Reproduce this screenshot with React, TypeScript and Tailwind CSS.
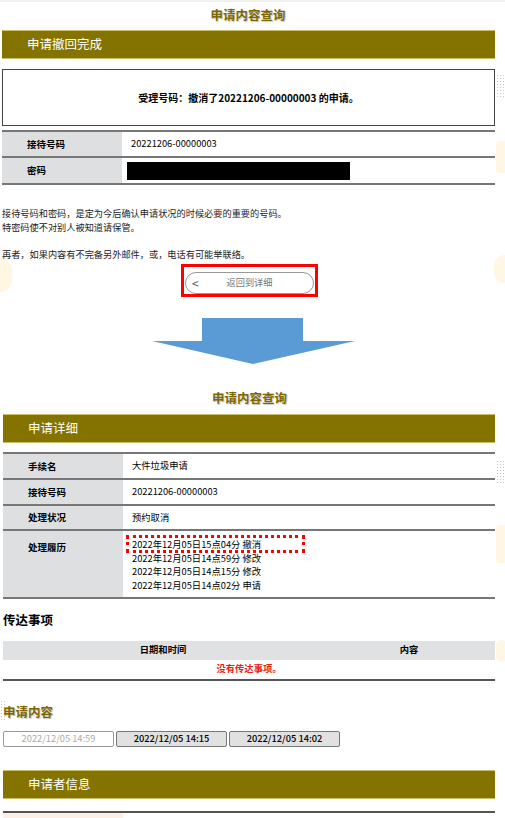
import React from "react";

const FONT = { fontFamily: '"Noto Sans CJK SC", "Noto Sans", sans-serif' };

function Bar({ title }: { title: string }) {
  return (
    <div className="h-[29px] bg-[#857300] border-t border-b border-[#c9bd6a] flex items-center pl-[25px]">
      <span className="text-white text-[12.5px] leading-none">{title}</span>
    </div>
  );
}

function Title({ text }: { text: string }) {
  return (
    <div className="text-center text-[12.5px] font-bold text-[#7d6800] [text-shadow:1px_1px_1px_#c8c8c8] leading-none">
      {text}
    </div>
  );
}

function Row({
  label,
  children,
  h,
  top = false,
}: {
  label: string;
  children: React.ReactNode;
  h: string;
  top?: boolean;
}) {
  return (
    <div className={`flex border-b-2 border-[#777] ${h}`}>
      <div
        className={`w-[120px] shrink-0 bg-[#dedfe0] pl-[25px] text-[9.5px] font-bold text-black flex ${
          top ? "items-start pt-[9px]" : "items-center"
        }`}
      >
        {label}
      </div>
      <div className={`flex-1 pl-[9px] text-[9.3px] text-black flex ${top ? "items-start" : "items-center"}`}>
        {children}
      </div>
    </div>
  );
}

export default function App() {
  return (
    <div className="relative w-[505px] h-[818px] overflow-hidden bg-white" style={FONT}>
      {/* faint side decorations */}
      <div className="absolute left-[496px] top-[74px] w-[9px] h-[24px] bg-[radial-gradient(#c9c4d8_1px,transparent_1px)] bg-[length:3px_3px]" />
      <div className="absolute left-[496px] top-[460px] w-[9px] h-[24px] bg-[radial-gradient(#c9c4d8_1px,transparent_1px)] bg-[length:3px_3px]" />
      <div className="absolute left-0 top-[700px] w-[5px] h-[22px] bg-[radial-gradient(#c9c4d8_1px,transparent_1px)] bg-[length:3px_3px]" />
      <div className="absolute left-[496px] top-[141px] w-[12px] h-[32px] rounded-[4px] bg-[#fff7e4]" />
      <div className="absolute left-[496px] top-[525px] w-[12px] h-[38px] rounded-[4px] bg-[#fff7e4]" />
      <div className="absolute left-[496px] top-[640px] w-[12px] h-[22px] rounded-[6px] bg-[#fff7e4]" />
      <div className="absolute left-[494px] top-[255px] w-[22px] h-[28px] rounded-full bg-[#fff7e4]" />
      <div className="absolute left-[-12px] top-[258px] w-[24px] h-[34px] rounded-full bg-[#fff7e4]" />

      <div className="relative">
        <div className="h-[2px] bg-[#f0f0f0]" />
        <div className="h-[28px] flex items-center justify-center pr-[9px] pb-[2px]">
          <Title text="申请内容查询" />
        </div>

        <div className="pl-[2px] pr-[10px]">
          <Bar title="申请撤回完成" />

          <div className="mt-[10px] h-[57px] border border-[#444] flex items-center justify-center">
            <span className="text-[10px] font-bold text-black">受理号码：撤消了20221206-00000003 的申请。</span>
          </div>

          <div className="mt-[4px] border-t-2 border-[#777]">
            <Row label="接待号码" h="h-[26px]">20221206-00000003</Row>
            <Row label="密码" h="h-[27px]">
              <div className="w-[223px] h-[18px] bg-black -ml-[4px]" />
            </Row>
          </div>

          <div className="mt-[22px] text-[9.2px] leading-[13.5px] text-[#222]">
            <p>接待号码和密码，是定为今后确认申请状况的时候必要的重要的号码。</p>
            <p>特密码使不对别人被知道请保管。</p>
            <p>&nbsp;</p>
            <p>再者，如果内容有不完备另外邮件，或，电话有可能举联络。</p>
          </div>

          <div className="flex justify-center mt-[3px] pl-[2px]">
            <div className="w-[137px] h-[33px] border-[3px] border-[#ff0000] flex items-center justify-center">
              <div className="w-[129px] h-[22px] mt-[4px] rounded-[11px] border border-[#999] bg-white flex items-center relative">
                <span className="absolute left-[6px] text-[12px] text-[#555] leading-none">&lt;</span>
                <span className="flex-1 text-center text-[9.2px] text-[#777]">返回到详细</span>
              </div>
            </div>
          </div>
        </div>

        {/* arrow */}
        <div className="flex justify-center mt-[21px] pl-[1px]">
          <svg width="203" height="46" viewBox="0 0 203 46">
            <polygon points="50,0 151,0 151,23 203,23 101,46 0,23 50,23" fill="#5b9bd5" />
          </svg>
        </div>

        <div className="mt-[27px] h-[14px] flex items-center justify-center pr-[6px]">
          <Title text="申请内容查询" />
        </div>

        <div className="pl-[3px] pr-[10px] mt-[9px]">
          <Bar title="申请详细" />

          <div className="mt-[9px] border-t-2 border-[#777]">
            <Row label="手续名" h="h-[26px]">大件垃圾申请</Row>
            <Row label="接待号码" h="h-[26px]">20221206-00000003</Row>
            <Row label="处理状况" h="h-[25px]">预约取消</Row>
            <Row label="处理履历" h="h-[68px]" top>
              <div className="pt-[7px] leading-[13.6px]">
                <div className="relative">
                  2022年12月05日15点04分 撤消
                  <div className="absolute left-[-6px] top-[-3px] w-[179px] h-[18px] border-[3px] border-dotted border-[#ff0000]" />
                </div>
                <div>2022年12月05日14点59分 修改</div>
                <div>2022年12月05日14点15分 修改</div>
                <div>2022年12月05日14点02分 申请</div>
              </div>
            </Row>
          </div>

          <div className="mt-[15px] text-[12.5px] font-bold text-black leading-none">传达事项</div>

          <div className="mt-[14px] border-b-2 border-[#555]">
            <div className="flex h-[19px] bg-[#e0e1e2] text-[9.3px] font-bold text-black items-center">
              <div className="w-[320px] text-center">日期和时间</div>
              <div className="flex-1 text-center">内容</div>
            </div>
            <div className="h-[19px] flex items-center justify-center text-[9.3px] font-bold text-[#e8200c]">
              没有传达事项。
            </div>
          </div>

          <div className="mt-[25px] text-[12.5px] font-bold text-[#7d6800] [text-shadow:1px_1px_1px_#c8c8c8] leading-none">
            申请内容
          </div>

          <div className="mt-[13px] flex gap-[2px] text-[9.3px]">
            <div className="w-[111px] h-[16px] border border-[#999] rounded-[2px] bg-white text-[#aaa] flex items-center justify-center">
              2022/12/05 14:59
            </div>
            <div className="w-[111px] h-[16px] border border-[#777] rounded-[2px] bg-[#e1e1e1] text-black font-medium flex items-center justify-center">
              2022/12/05 14:15
            </div>
            <div className="w-[111px] h-[16px] border border-[#777] rounded-[2px] bg-[#e1e1e1] text-black font-medium flex items-center justify-center">
              2022/12/05 14:02
            </div>
          </div>

          <div className="mt-[23px]">
            <Bar title="申请者信息" />
          </div>

          <div className="mt-[12px] border-t-2 border-[#555]">
            <div className="w-[120px] h-[20px] bg-[#fdeee6]" />
          </div>
        </div>
      </div>
    </div>
  );
}
